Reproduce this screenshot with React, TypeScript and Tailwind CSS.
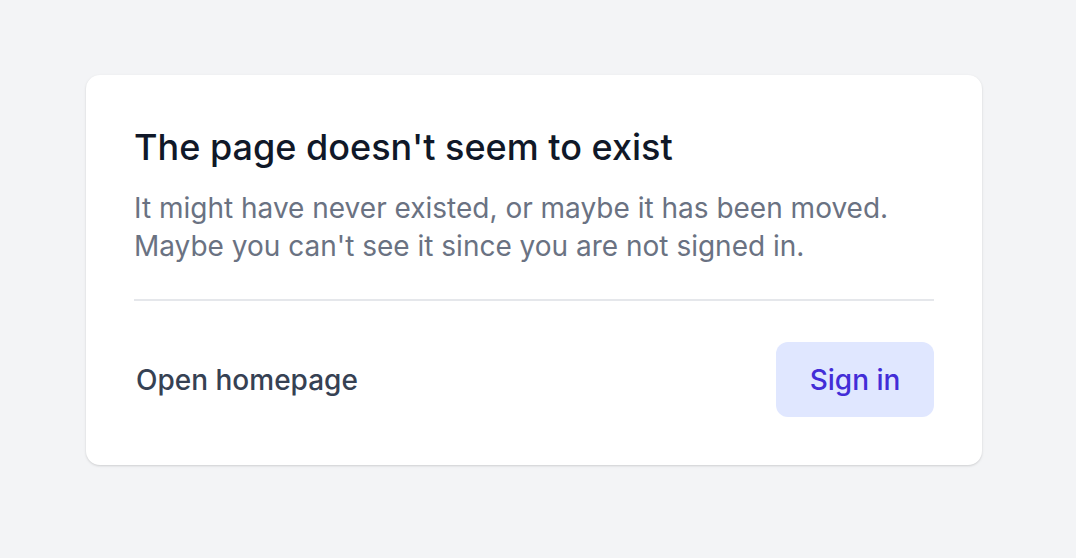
export default function App() {
  return (
    <div className="flex min-h-[558px] w-full items-start bg-gray-100 pl-[86px] pt-[75px] font-['Inter',sans-serif]">
      <div className="w-[896px] rounded-[14px] bg-white p-12 shadow-[0_1px_3px_rgba(0,0,0,0.1),0_1px_2px_rgba(0,0,0,0.06)]">
        <h1 className="text-[36px] font-medium leading-[48px] text-gray-900">The page doesn't seem to exist</h1>
        <p className="mt-[18px] text-[28px] leading-[38px] text-gray-500">
          It might have never existed, or maybe it has been moved.
          <br />
          Maybe you can't see it since you are not signed in.
        </p>
        <div className="mt-[34px] border-t-2 border-gray-200" />
        <div className="mt-[41px] flex items-center justify-between">
          <a href="#" className="pl-[2px] text-[28px] font-medium text-gray-700">Open homepage</a>
          <button className="flex h-[75px] w-[158px] items-center justify-center rounded-[12px] bg-indigo-100 text-[28px] font-medium text-indigo-700">
            Sign in
          </button>
        </div>
      </div>
    </div>
  );
}
